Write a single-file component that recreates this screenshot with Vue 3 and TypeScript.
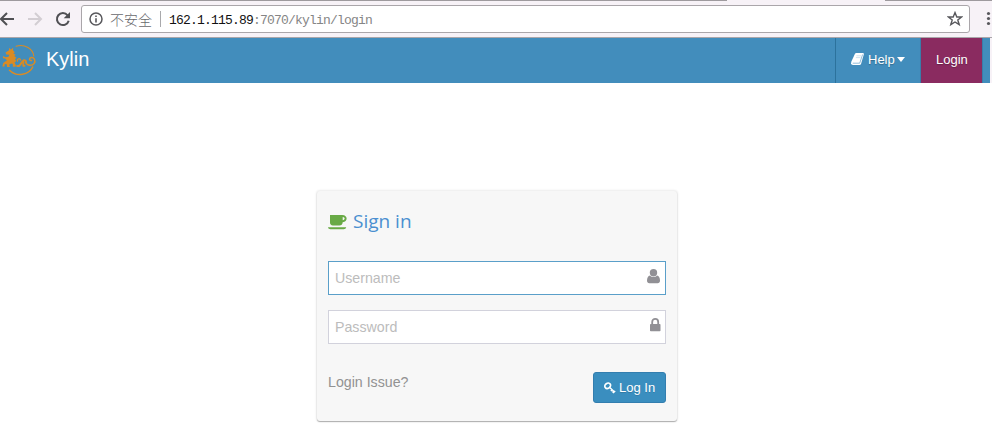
<script setup lang="ts">
import { ref } from 'vue'

const username = ref('')
const password = ref('')
</script>

<template>
  <div class="window">
    <div class="tabline"><i class="tabline-left"></i><i class="tabline-right"></i></div>
    <div class="toolbar">
      <svg class="nav-icons" width="81" height="34" viewBox="0 0 81 34" fill="none">
        <path d="M14 16H1.5M7 10L1 16L7 22" stroke="#505054" stroke-width="2" />
        <path d="M28 16H40.5M35 10L41 16L35 22" stroke="#d3ced3" stroke-width="2" />
        <path d="M67.6 12.3A6 6 0 1 0 68.7 17.7" stroke="#505054" stroke-width="2" />
        <path d="M70 9V15.3H63.7Z" fill="#505054" />
      </svg>
      <div class="address">
        <svg class="info" width="14" height="14" viewBox="0 0 14 14">
          <circle cx="7" cy="7" r="6" fill="none" stroke="#58585c" stroke-width="1.5" />
          <path d="M6.2 3.5h1.6v1.6H6.2zM6.2 6.2h1.6v4.4H6.2z" fill="#58585c" />
        </svg>
        <span class="insecure">不安全</span>
        <span class="divider"></span>
        <span class="url"><b>162.1.115.89</b>:7070/kylin/login</span>
        <svg class="star" width="16" height="16" viewBox="0 0 16 16">
          <path d="M8 1.6L9.8 6H14.6L10.8 9L12.2 13.7L8 11L3.8 13.7L5.2 9L1.4 6H6.2Z" fill="none" stroke="#58585c" stroke-width="1.4" />
        </svg>
      </div>
      <svg class="menu" width="22" height="34" viewBox="0 0 22 34" fill="#58585c">
        <circle cx="18.5" cy="11.5" r="1.6" /><circle cx="18.5" cy="16.5" r="1.6" /><circle cx="18.5" cy="21.5" r="1.6" />
      </svg>
    </div>
    <header class="navbar">
      <div class="brand">
        <svg width="40" height="45" viewBox="0 0 40 45">
          <g fill="none" stroke="#d98b25" stroke-linecap="round" stroke-linejoin="round">
            <path d="M16 8.2C25 5.5 33 11 33.8 18" stroke-width="1.1" />
            <path d="M32.7 29C29 37 17 39.5 9.5 32.2" stroke-width="1.5" />
            <path d="M17.5 23.2C16.8 20.5 19.8 19.8 20.6 22" stroke-width="1.3" />
            <path d="M17.2 28H19.2L22.7 23.2C24 21.3 26.5 22.4 26 24.6" stroke-width="2" />
            <path d="M23.3 24V27.8H24.6" stroke-width="1.8" />
            <path d="M26 24.5C26.5 27.5 32 28.2 34 25.6C36.2 22.7 34 19 31.2 19.5C28.8 20 29.2 23 31.5 22.5" stroke-width="1.5" />
          </g>
          <path fill="#d98b25" d="M5.5 14.5L8.8 12.5L9.5 9.7L11 11.7L13.2 9.5L13 12.2L14.8 14.2L13.3 15.6L15.7 16.7L14.3 18L16.6 20L14.9 21L16.3 23.1L14.5 24.5L15.8 27.1L15.6 28.8H12.8V26L11.3 25.4L9.1 26.8L10 29H7L6.8 26.3L4.8 26L4.5 28.5H2.3L3.2 25L7 22.2L5 20.4L3.1 20.2L2.9 18.1L5.5 19.3L8.5 18.7L9.4 16.7L6.3 16.4Z" />
        </svg>
        <span>Kylin</span>
      </div>
      <nav class="links">
        <a class="help">
          <svg width="14" height="13" viewBox="0 0 14 13">
            <path fill="#fff" d="M4.1.6Q4.4 0 5.3 0H11.8Q13.2 0 12.8 1.4L10.1 10.8Q9.7 12 8.5 12H2Q0 12 0 10.2L.4 8.6Z" />
            <path d="M5.4 2.8H10M4.9 4.6H9.4" stroke="#bcd7e7" stroke-width=".7" fill="none" />
            <path d="M1.7 10.2H8.7L11.6 1.5" stroke="#75acd0" stroke-width=".8" fill="none" />
          </svg>
          <span>Help</span>
          <i class="caret"></i>
        </a>
        <a class="login">Login</a>
        <span class="tail"></span>
      </nav>
    </header>
    <main>
      <form class="card" @submit.prevent>
        <h1>
          <svg width="19" height="15" viewBox="0 0 19 15">
            <path fill="#69aa46" fill-rule="evenodd" d="M2 0H14.3C20 0 20 7 14.7 7.2C14.5 9.3 13.3 10.4 11.4 10.4H4.8C3 10.4 2 9.3 2 7.5ZM14.7 2V5.2C17.3 5.2 17.3 2 14.7 2ZM0 12.3H18.2C17.9 13.8 16.8 14.2 15.8 14.2H2.4C1.3 14.2.3 13.8 0 12.3Z" />
          </svg>
          <span>Sign in</span>
        </h1>
        <label class="field active">
          <input v-model="username" type="text" placeholder="Username" />
          <svg width="13" height="15" viewBox="0 0 13 15" fill="#919095">
            <circle cx="6.5" cy="3.8" r="3.7" />
            <path d="M3 6.5C4.8 8.5 8.2 8.5 10 6.5C12 6.8 13 9 13 11.8C13 13.5 12 14.2 10.7 14.2H2.3C1 14.2 0 13.5 0 11.8C0 9 1 6.8 3 6.5Z" />
          </svg>
        </label>
        <label class="field">
          <input v-model="password" type="password" placeholder="Password" />
          <svg width="11" height="14" viewBox="0 0 11 14">
            <path d="M2.2 7V3.9C2.2 -.1 8.2 -.1 8.2 3.9V7" stroke="#919095" stroke-width="1.8" fill="none" />
            <rect y="6" width="10.5" height="7.3" rx=".8" fill="#919095" />
          </svg>
        </label>
        <div class="actions">
          <a>Login Issue?</a>
          <button type="submit">
            <svg width="12" height="12" viewBox="0 0 12 12">
              <ellipse cx="3.7" cy="3.8" rx="3" ry="2.5" transform="rotate(-35 3.7 3.8)" fill="none" stroke="#fff" stroke-width="1.7" />
              <path d="M5.2 5L10.6 9.9M6.8 9.1L8.7 7.4M9 11.1L11.2 9M8.2 10.2L9.6 8.9" stroke="#fff" stroke-width="1.4" />
            </svg>
            <span>Log In</span>
          </button>
        </div>
      </form>
    </main>
  </div>
</template>

<style>
body { margin: 0; background: #fff; }
</style>

<style scoped>
.window { width: 992px; height: 445px; overflow: hidden; font-family: "Liberation Sans", Arial, sans-serif; }
.tabline { height: 2px; display: flex; justify-content: space-between; background: #f7f2f7; }
.tabline i { height: 1px; background: #9e9a9e; }
.tabline-left { width: 727px; }
.tabline-right { width: 107px; }
.toolbar { box-sizing: border-box; height: 36px; display: flex; background: #f7f2f7; border-bottom: 1px solid #aaa6aa; }
.nav-icons { margin-top: 1px; flex: none; }
.address { box-sizing: border-box; width: 889px; height: 28px; margin-top: 3px; border: 1px solid #aaa6aa; border-radius: 3px; background: #fff; display: flex; align-items: center; padding: 0 6px 0 7px; }
.info { flex: none; }
.insecure { font: 14px/18px "Noto Sans CJK SC", sans-serif; font-weight: 300; color: #68686c; margin-left: 7px; width: 43px; white-space: nowrap; }
.divider { width: 1px; height: 16px; background: #a9a9ac; margin-left: 7px; }
.url { margin: 3px 0 0 8px; font: 13px/18px "Liberation Mono", monospace; letter-spacing: -.8px; color: #858585; white-space: nowrap; }
.url b { font-weight: 400; color: #111; }
.star { margin-left: auto; }
.navbar { width: 990px; height: 45px; background: #428dbc; box-shadow: 2px 0 #f7f2f7; display: flex; justify-content: space-between; color: #fff; }
.brand { display: flex; font-size: 20px; line-height: 43px; }
.brand span { margin-left: 6px; }
.links { display: flex; font-size: 13px; line-height: 43px; text-shadow: 0 1px 1px rgba(0, 0, 0, .25); }
.help { box-sizing: border-box; width: 85px; border-left: 1px solid #2c729c; display: flex; padding-left: 15px; }
.help svg { margin: 15px 3px 0 0; }
.caret { width: 0; height: 0; border: 4px solid transparent; border-top-color: #fff; border-top-width: 5px; border-bottom: 0; margin: 19px 0 0 2px; }
.login { box-sizing: border-box; width: 62px; background: #8a2b60; border-left: 1px solid #397da9; padding-left: 15px; }
.tail { width: 7px; border-left: 1px solid #397da9; }
main { padding: 108px 0 0 317px; }
.card { box-sizing: border-box; width: 360px; height: 230px; padding: 0 11px; background: #f7f7f7; border-radius: 3px; box-shadow: 0 0 2px 1px rgba(0, 0, 0, .08), 0 1px 1px rgba(0, 0, 0, .28); }
h1 { margin: 0; height: 70px; display: flex; color: #4b8fd0; font: 400 19px/60px "Open Sans", sans-serif; }
h1 svg { margin: 24px 6px 0 0; }
.field { box-sizing: border-box; height: 34px; display: flex; background: #fff; border: 1px solid #d2d2dc; margin-bottom: 15px; padding: 0 4px 0 6px; }
.field.active { border-color: #5a9fc9; padding-right: 5px; }
.field input { flex: 1; min-width: 0; border: 0; outline: 0; padding: 0; background: transparent; font: 14.2px "Liberation Sans", Arial, sans-serif; }
.field input::placeholder { color: #bcbcbc; opacity: 1; }
.field svg { margin-top: 7px; }
.actions { display: flex; justify-content: space-between; padding-top: 13px; }
.actions a { color: #929292; font-size: 14.2px; line-height: 20px; }
button { box-sizing: border-box; width: 73px; height: 31px; border: 1px solid #337eaf; border-radius: 3px; background: #3a8ebf; color: #fff; padding: 0 0 0 10px; display: flex; align-items: center; font: 13px "Liberation Sans", Arial, sans-serif; text-shadow: 0 1px rgba(0, 0, 0, .15); }
button svg { margin-right: 3px; }
</style>
